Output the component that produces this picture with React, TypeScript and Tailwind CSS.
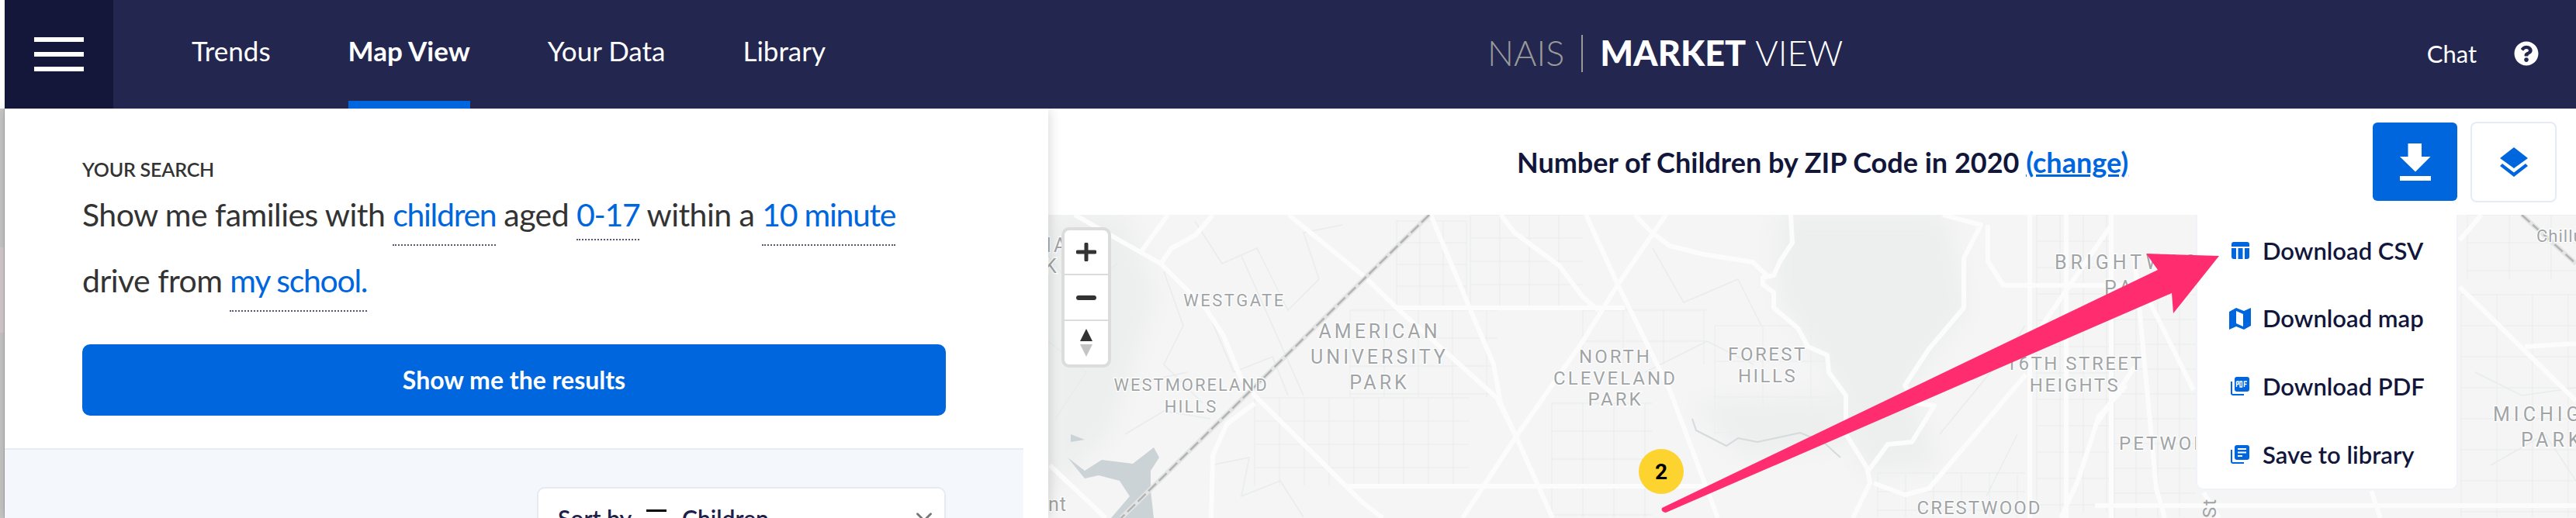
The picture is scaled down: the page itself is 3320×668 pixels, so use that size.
import React from 'react';
import { FaQuestionCircle } from 'react-icons/fa';
import { ChevronDown } from 'lucide-react';

// thin street blocks: x0, x1, y0, y1, step x, step y
const streetGrids = [
    [1800, 1890, 285, 395, 30, 28],
    [1895, 2040, 277, 395, 38, 30],
    [1617, 1893, 513, 627, 32, 30],
    [1740, 1930, 400, 512, 44, 36],
    [2040, 2200, 400, 470, 52, 40],
    [2000, 2130, 520, 667, 40, 36],
    [2210, 2370, 420, 560, 62, 46],
    [2625, 2720, 277, 660, 30, 34],
    [2725, 2830, 380, 667, 28, 32],
    [3172, 3320, 380, 667, 46, 40],
    [3180, 3320, 277, 360, 54, 36],
    [2420, 2610, 610, 667, 36, 24],
];

const thinStreets = [
    'M1540 285L1575 340L1620 320L1660 400L1700 360L1680 300L1730 290',
    'M1600 330L1640 420L1680 510',
    'M1560 410L1590 480L1640 460L1660 510',
    'M1500 350L1525 420L1500 470L1550 520',
    'M1440 500L1530 480M1450 560L1500 530L1560 540',
    'M1560 600L1610 590L1600 640L1650 620L1680 667',
    'M1351 330L1390 380L1440 340M1351 440L1400 480L1360 540',
    'M2130 320L2170 390L2240 360L2270 420M2120 480L2200 440L2260 470',
    'M2500 560L2590 450L2610 420M2560 640L2600 560',
    'M3190 480L3250 510L3320 500M3210 600L3280 560L3320 620',
];

const mainRoads = [
    'M1385 277L1496 340L1554 398L1577 433L1599 487L1617 510L1755 647L1782 668',
    'M1661 277L1760 358L1800 397L1929 513L1954 563L2001 668',
    'M1844 277L1894 397L1925 470L1934 520L1954 563',
    'M1934 277L1952 300L2010 343L2040 383L2060 400',
    'M2147 277L2085 367L2040 440L1954 563L1885 668',
    'M1800 397H2094',
    'M1733 627H2196',
    'M1617 520L1581 547L1563 587L1561 668',
    'M1563 277L1541 303L1510 320L1496 340',
    'M1505 277L1472 323',
    'M1353 600L1425 668',
    'M2044 277L2085 367L2152 503L2214 668',
    'M2107 277L2129 300L2152 317L2196 328L2259 338L2277 355',
    'M2308 277L2310 313L2294 337L2286 355L2272 358L2272 367L2286 377L2286 397L2317 423L2330 447L2355 458L2357 480L2379 510L2379 560L2406 603L2410 623L2388 668',
    'M2504 277L2553 290L2531 333L2531 397L2486 450L2455 497L2470 520L2493 523L2464 570L2433 573L2408 607',
    'M2415 623L2455 638L2486 630L2611 483',
    'M2616 277V668',
    'M2663 277V668',
    'M2721 277V668',
    'M2562 290L2562 337L2582 368H2830',
    'M2719 293L2620 437',
    'M2740 497L2705 537L2678 620L2656 668',
    'M2751 330L2779 630L2790 668',
    'M2771 390L2827 503',
    'M2700 652H3320',
    'M2751 473L2700 550',
    'M3170 370L3320 517',
    'M3254 447L3320 443',
    'M3198 277L3170 310',
    'M3056 633L3068 668',
    'M2840 635L2860 668',
];

// x, y are the text's anchor, the text itself is centred unless start is set
const mapLabels = [
    { t: 'WESTGATE', x: 1591, y: 395, s: 22, l: 2.5 },
    { t: 'AMERICAN', x: 1778, y: 436, s: 25, l: 4 },
    { t: 'UNIVERSITY', x: 1778, y: 469, s: 25, l: 4 },
    { t: 'PARK', x: 1778, y: 502, s: 25, l: 4 },
    { t: 'WESTMORELAND', x: 1535, y: 504, s: 22, l: 2 },
    { t: 'HILLS', x: 1535, y: 532, s: 22, l: 2 },
    { t: 'NORTH', x: 2082, y: 468, s: 24, l: 3 },
    { t: 'CLEVELAND', x: 2082, y: 496, s: 24, l: 3 },
    { t: 'PARK', x: 2082, y: 523, s: 24, l: 3 },
    { t: 'FOREST', x: 2278, y: 465, s: 24, l: 2.5 },
    { t: 'HILLS', x: 2278, y: 493, s: 24, l: 2.5 },
    { t: 'BRIGHTWOOD', x: 2648, y: 347, s: 25, l: 5, start: true },
    { t: 'PARK', x: 2712, y: 380, s: 25, l: 5, start: true },
    { t: '16TH STREET', x: 2674, y: 477, s: 24, l: 2.5 },
    { t: 'HEIGHTS', x: 2674, y: 505, s: 24, l: 2.5 },
    { t: 'PETWORTH', x: 2731, y: 580, s: 24, l: 3, start: true },
    { t: 'CRESTWOOD', x: 2551, y: 663, s: 24, l: 2 },
    { t: 'MICHIGAN', x: 3213, y: 543, s: 25, l: 5, start: true },
    { t: 'PARK', x: 3249, y: 576, s: 25, l: 5, start: true },
    { t: 'Chillum', x: 3269, y: 312, s: 22, l: 1, start: true },
    { t: 'nt', x: 1351, y: 659, s: 25, l: 1, start: true },
    { t: 'IA', x: 1348, y: 325, s: 25, l: 3, start: true },
    { t: 'K', x: 1346, y: 352, s: 25, l: 3, start: true },
];

const gridPath = ([x0, x1, y0, y1, dx, dy]: number[]) => {
    let d = '';
    for (let x = x0; x <= x1; x += dx) d += `M${x} ${y0}V${y1}`;
    for (let y = y0; y <= y1; y += dy) d += `M${x0} ${y}H${x1}`;
    return d;
};

const MapDrawing = () => (
    <svg className="absolute inset-0 w-full h-full" viewBox="1351 277 1969 391">
        <defs>
            <filter id="soft">
                <feGaussianBlur stdDeviation="14" />
            </filter>
        </defs>
        <rect x="1351" y="277" width="1969" height="391" fill="#f4f5f4" />
        <g fill="#edeeee" filter="url(#soft)">
            <path d="M2290 277H2510L2535 400L2460 500L2500 600L2400 610L2375 510L2290 380Z" />
            <path d="M2180 520L2370 510L2380 570L2250 590Z" />
            <path d="M1351 277H1450L1490 380L1430 560L1351 640Z" />
        </g>
        <path d={streetGrids.map(gridPath).join('')} stroke="#ebefed" strokeWidth="1.5" fill="none" />
        <path d={thinStreets.join('')} stroke="#e8ecea" strokeWidth="1.5" fill="none" />
        <path d="M2181 540L2186 555L2225 575L2240 565L2265 570L2320 558L2350 570L2372 590" stroke="#d3dbdd" strokeWidth="2" fill="none" />
        <path d="M1376 590L1398 607L1420 593L1460 598L1487 577L1494 590L1483 607L1483 633L1487 668H1432L1456 640L1443 620L1416 613L1398 617Z" fill="#cbd3d6" />
        <path d="M1380 560L1398 567L1380 570Z" fill="#cbd3d6" />
        <path d={mainRoads.join('')} stroke="#fbfcfb" strokeWidth="6" fill="none" strokeLinejoin="round" />
        <path d="M1842 277L1445 668M3250 277L3320 340" stroke="#e3e4e4" strokeWidth="6" fill="none" />
        <path d="M1842 277L1445 668M3250 277L3320 340" stroke="#b3b3b3" strokeWidth="2.5" strokeDasharray="14 5" fill="none" />
        {mapLabels.map((label) => (
            <text
                key={`${label.t}-${label.x}-${label.y}`}
                x={label.x}
                y={label.y}
                fontSize={label.s}
                letterSpacing={label.l}
                textAnchor={label.start ? 'start' : 'middle'}
                fontFamily="Roboto, sans-serif"
                fill="#a1a4a6"
                stroke="#ffffff"
                strokeWidth="2.5"
                paintOrder="stroke"
            >
                {label.t}
            </text>
        ))}
        <text x="0" y="0" fontSize="24" letterSpacing="2" fontFamily="Roboto, sans-serif" fill="#a1a4a6" transform="translate(2856 668) rotate(-90)">
            St
        </text>
        <circle cx="2141" cy="608" r="29" fill="#fdd32f" />
        <text x="2141" y="618" fontSize="28" fontWeight="700" textAnchor="middle" fontFamily="Roboto, sans-serif" fill="#000000">
            2
        </text>
    </svg>
);

const NavControl = () => (
    <div className="absolute left-[17px] top-[16px] w-[64px] h-[181px] rounded-[10px] border-[4px] border-[#dcdcdc] bg-white flex flex-col">
        <div className="h-[58px] flex items-center justify-center border-b-2 border-[#dcdcdc]">
            <svg width="26" height="24" viewBox="0 0 26 24"><path d="M13 2v20M2 12h22" stroke="#333" strokeWidth="5" strokeLinecap="round" /></svg>
        </div>
        <div className="h-[59px] flex items-center justify-center border-b-2 border-[#dcdcdc]">
            <svg width="26" height="8" viewBox="0 0 26 8"><path d="M3 4h20" stroke="#333" strokeWidth="6" strokeLinecap="round" /></svg>
        </div>
        <div className="flex-1 flex items-center justify-center">
            <svg width="16" height="36" viewBox="0 0 16 36">
                <path d="M8 0L16 16H0Z" fill="#333" />
                <path d="M8 36L16 20H0Z" fill="#c4c4c4" />
            </svg>
        </div>
    </div>
);

const menuIcons = {
    csv: (
        <svg width="23" height="22" viewBox="0 0 23 22" fill="#0066dd">
            <path d="M3 0h17a3 3 0 0 1 3 3v3H0V3a3 3 0 0 1 3-3Z" />
            <path d="M0 8h6v14H3a3 3 0 0 1-3-3ZM8.5 8h6v14h-6ZM17 8h6v11a3 3 0 0 1-3 3h-3Z" />
        </svg>
    ),
    map: (
        <svg width="28" height="28" viewBox="0 0 28 28" fill="#0066dd">
            <path fillRule="evenodd" d="M0 5L9 0L19 4L28 0V23L19 28L9 24L0 28ZM9 4V20L18 24V8Z" />
        </svg>
    ),
    pdf: (
        <svg width="24" height="24" viewBox="0 0 24 24">
            <path d="M1 6v15a2 2 0 0 0 2 2h14" stroke="#0066dd" strokeWidth="2" fill="none" />
            <rect x="5" y="0" width="19" height="19" rx="3" fill="#0066dd" />
            <path d="M7.5 6v7M7.5 6h2.5v3.5H7.5M12 6v7h2.5V6ZM17.5 13V6H21M17.5 9.5H20.5" stroke="#fff" strokeWidth="1.4" fill="none" />
        </svg>
    ),
    library: (
        <svg width="24" height="24" viewBox="0 0 24 24">
            <path d="M1 6v15a2 2 0 0 0 2 2h14" stroke="#0066dd" strokeWidth="2" fill="none" />
            <rect x="5" y="0" width="19" height="19" rx="3" fill="#0066dd" />
            <path d="M9 5h11M9 9.5h11M9 14h6" stroke="#fff" strokeWidth="2" fill="none" />
        </svg>
    ),
};

const menuItems = [
    { label: 'Download CSV', icon: menuIcons.csv },
    { label: 'Download map', icon: menuIcons.map },
    { label: 'Download PDF', icon: menuIcons.pdf },
    { label: 'Save to library', icon: menuIcons.library },
];

const DownloadMenu = () => (
    <div className="absolute left-[1479px] top-0 w-[338px] h-[355px] bg-white rounded-b-[10px] border-2 border-t-0 border-[#f0f3f8] flex flex-col pt-[2px]">
        {menuItems.map((item) => (
            <div key={item.label} className="h-[88px] flex items-center text-[31px] font-semibold text-[#11163a]">
                <div className="w-[84px] flex items-center justify-center pl-[26px]">{item.icon}</div>
                <span>{item.label}</span>
            </div>
        ))}
    </div>
);

const Link = ({ children, short }: { children: React.ReactNode; short?: boolean }) => (
    <span className={`inline-block leading-[50px] tracking-[-1.3px] text-[#0066dd] border-b-2 border-dotted border-[#555a70] ${short ? 'pb-[6px]' : 'pb-[13px]'}`}>
        {children}
    </span>
);

export default function App() {
    return (
        <div className="w-[3320px] h-[668px] overflow-hidden flex flex-col bg-white font-['Lato',sans-serif]">
            <header className="relative z-20 h-[140px] shrink-0 flex bg-[#23274f] text-white ml-[6px]">
                <div className="w-[140px] bg-[#14163a] flex flex-col items-center justify-center gap-[13px]">
                    <div className="w-[64px] h-[6px] bg-white" />
                    <div className="w-[64px] h-[6px] bg-white" />
                    <div className="w-[64px] h-[6px] bg-white" />
                </div>
                <nav className="ml-[101px] flex gap-[100px] text-[35px]">
                    <a className="flex items-center border-b-[10px] border-transparent">Trends</a>
                    <a className="flex items-center border-b-[10px] border-[#0066dd] font-bold">Map View</a>
                    <a className="flex items-center border-b-[10px] border-transparent">Your Data</a>
                    <a className="flex items-center border-b-[10px] border-transparent">Library</a>
                </nav>
                <div className="absolute left-[1911px] top-0 h-full flex items-center text-[45px] pb-[2px]">
                    <span className="font-light text-[#9a9a9a]">NAIS</span>
                    <span className="w-[2px] h-[48px] bg-[#999] mx-[22px]" />
                    <span className="font-black">MARKET</span>
                    <span className="font-light ml-[12px]">VIEW</span>
                </div>
                <div className="ml-auto flex items-center pr-[48px] text-[31px] gap-[48px] pb-[2px]">
                    <span>Chat</span>
                    <FaQuestionCircle size={32} />
                </div>
            </header>

            <div className="flex-1 flex min-h-0">
                <div className="relative w-[6px] bg-[#c8c8c8] border-r border-[#a9a9a9] overflow-hidden">
                    <div className="absolute left-0 top-[179px] w-full h-[110px] bg-[#d5cdd0]" />
                </div>

                <aside className="relative z-10 w-[1345px] shrink-0 bg-white shadow-[0_0_16px_rgba(0,0,0,0.18)]">
                    <div className="w-[1313px] h-full flex flex-col text-[#333]">
                        <div className="h-[440px] shrink-0 px-[100px] pt-[64px] border-b-2 border-[#e8edf5]">
                            <div className="text-[25px] font-semibold leading-[28px] tracking-[-0.2px]">YOUR SEARCH</div>
                            <p className="text-[41px] leading-[50px] mt-[20px] tracking-[-0.55px]">
                                Show me families with <Link>children</Link> aged <Link short>0-17</Link> within a <Link>10 minute</Link> <span className="inline-block mt-[20px]">drive from</span> <Link>my school.</Link>
                            </p>
                            <button className="w-[1113px] h-[92px] mt-[42px] bg-[#0066dd] rounded-[10px] text-white text-[32px] font-bold">
                                Show me the results
                            </button>
                        </div>
                        <div className="flex-1 bg-[#f4f7fc] pt-[48px]">
                            <div className="ml-[686px] w-[527px] h-[120px] bg-white border-2 border-[#e6ebf3] rounded-[10px] pt-[16px] pl-[25px] pr-[9px] flex items-start text-[30px] font-semibold text-[#1e2147]">
                                <span>Sort by</span>
                                <div className="ml-[19px] mt-[11px] w-[26px] h-[3px] bg-black" />
                                <span className="ml-[20px]">Children</span>
                                <ChevronDown className="ml-auto mt-[4px] text-[#777]" size={34} />
                            </div>
                        </div>
                    </div>
                </aside>

                <main className="flex-1 flex flex-col min-w-0">
                    <div className="h-[137px] shrink-0 flex items-center">
                        <h1 className="ml-[604px] text-[36px] font-bold text-[#11163a]">
                            Number of Children by ZIP Code in 2020 <a className="text-[#0066dd] underline">(change)</a>
                        </h1>
                        <div className="ml-auto mr-[25px] flex items-center gap-[17px]">
                            <button className="w-[109px] h-[101px] rounded-[6px] bg-[#0066dd] flex items-center justify-center">
                                <svg width="40" height="48" viewBox="0 0 40 48" fill="#fff">
                                    <path d="M10.5 0H28V17H39.5L20 36.5L0 17H10.5Z" />
                                    <rect y="42" width="40" height="6" />
                                </svg>
                            </button>
                            <button className="w-[111px] h-[104px] rounded-[8px] border-2 border-[#e6ebf4] bg-white flex items-center justify-center">
                                <svg width="36" height="38" viewBox="0 0 36 38" fill="#0066dd">
                                    <path d="M18 0L36 14L18 27L0 14Z" />
                                    <path d="M0 24L3 21L18 32.5L33 21L36 24L18 38Z" />
                                </svg>
                            </button>
                        </div>
                    </div>
                    <div className="relative flex-1 overflow-hidden">
                        <MapDrawing />
                        <NavControl />
                        <DownloadMenu />
                        <svg className="absolute inset-0 w-full h-full" viewBox="1351 277 1969 391">
                            <path d="M2142 655L2781 348L2766 327L2860 330L2801 404L2799 378L2147 661Q2140 660 2142 655Z" fill="#ff2d6f" />
                        </svg>
                    </div>
                </main>
            </div>
        </div>
    );
}
